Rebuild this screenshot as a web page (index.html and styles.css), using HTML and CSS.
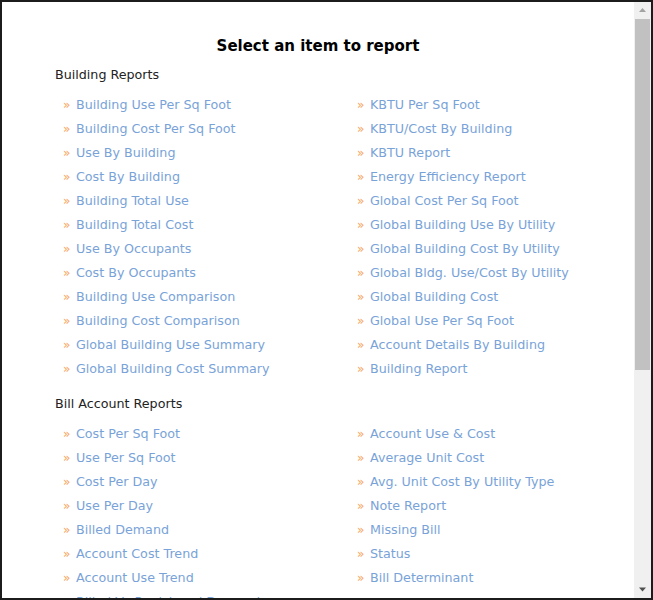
FILE: index.html
```html
<!DOCTYPE html>
<html lang="en">
<head>
    <meta charset="UTF-8">
    <meta name="viewport" content="width=device-width, initial-scale=1.0">
    <title>Reports</title>
    <link rel="stylesheet" href="styles.css">
</head>
<body>
    <div class="dialog">
        <div class="content">
            <h3 class="title">Select an item to report</h3>

            <h4 class="group">Building Reports</h4>
            <div class="cols">
                <ul class="links">
                    <li><a href="#">Building Use Per Sq Foot</a></li>
                    <li><a href="#">Building Cost Per Sq Foot</a></li>
                    <li><a href="#">Use By Building</a></li>
                    <li><a href="#">Cost By Building</a></li>
                    <li><a href="#">Building Total Use</a></li>
                    <li><a href="#">Building Total Cost</a></li>
                    <li><a href="#">Use By Occupants</a></li>
                    <li><a href="#">Cost By Occupants</a></li>
                    <li><a href="#">Building Use Comparison</a></li>
                    <li><a href="#">Building Cost Comparison</a></li>
                    <li><a href="#">Global Building Use Summary</a></li>
                    <li><a href="#">Global Building Cost Summary</a></li>
                </ul>
                <ul class="links">
                    <li><a href="#">KBTU Per Sq Foot</a></li>
                    <li><a href="#">KBTU/Cost By Building</a></li>
                    <li><a href="#">KBTU Report</a></li>
                    <li><a href="#">Energy Efficiency Report</a></li>
                    <li><a href="#">Global Cost Per Sq Foot</a></li>
                    <li><a href="#">Global Building Use By Utility</a></li>
                    <li><a href="#">Global Building Cost By Utility</a></li>
                    <li><a href="#">Global Bldg. Use/Cost By Utility</a></li>
                    <li><a href="#">Global Building Cost</a></li>
                    <li><a href="#">Global Use Per Sq Foot</a></li>
                    <li><a href="#">Account Details By Building</a></li>
                    <li><a href="#">Building Report</a></li>
                </ul>
            </div>

            <h4 class="group">Bill Account Reports</h4>
            <div class="cols">
                <ul class="links">
                    <li><a href="#">Cost Per Sq Foot</a></li>
                    <li><a href="#">Use Per Sq Foot</a></li>
                    <li><a href="#">Cost Per Day</a></li>
                    <li><a href="#">Use Per Day</a></li>
                    <li><a href="#">Billed Demand</a></li>
                    <li><a href="#">Account Cost Trend</a></li>
                    <li><a href="#">Account Use Trend</a></li>
                    <li><a href="#">Billed Vs Registered Demand</a></li>
                </ul>
                <ul class="links">
                    <li><a href="#">Account Use &amp; Cost</a></li>
                    <li><a href="#">Average Unit Cost</a></li>
                    <li><a href="#">Avg. Unit Cost By Utility Type</a></li>
                    <li><a href="#">Note Report</a></li>
                    <li><a href="#">Missing Bill</a></li>
                    <li><a href="#">Status</a></li>
                    <li><a href="#">Bill Determinant</a></li>
                </ul>
            </div>
        </div>

        <!-- vertical scrollbar -->
        <div class="scrollbar">
            <div class="sb-btn">
                <svg width="9" height="5" viewBox="0 0 9 5"><path d="M4.5 0 8 4H1z" fill="#a3a3a3"/></svg>
            </div>
            <div class="sb-thumb"></div>
            <div class="sb-track"></div>
            <div class="sb-btn">
                <svg width="9" height="5" viewBox="0 0 9 5"><path d="M1 0.5h7L4.5 4.5z" fill="#505050"/></svg>
            </div>
        </div>
    </div>
</body>
</html>
```

FILE: styles.css
```css
html, body {
    margin: 0;
    padding: 0;
}
body {
    font-family: "DejaVu Sans", Verdana, sans-serif;
    font-size: 12.7px;
    color: #222;
    background: #fff;
}
.dialog {
    display: flex;
    width: 653px;
    height: 600px;
    box-sizing: border-box;
    border: 2px solid #1c1c1c;
    overflow: hidden;
}
.content {
    flex: 1;
    min-width: 0;
    overflow: hidden;
    padding: 34px 0 0 53px;
}
.title {
    margin: 0 0 10px 0;
    padding-right: 53px;
    font-size: 15px;
    line-height: 20px;
    font-weight: bold;
    text-align: center;
    color: #000;
}
.group {
    margin: 0;
    font-size: 12.7px;
    line-height: 18px;
    font-weight: normal;
    color: #222;
}
.cols {
    display: flex;
    padding: 9px 0 14px 8px;
}
.links {
    list-style: none;
    margin: 0;
    padding: 0;
    width: 294px;
    flex-shrink: 0;
}
.links li {
    line-height: 24px;
    height: 24px;
    white-space: nowrap;
}
.links li::before {
    content: "\00bb";
    display: inline-block;
    width: 13px;
    color: #f7a35c;
    font-size: 12px;
}
.links a {
    color: #79a3d8;
    text-decoration: none;
}
.links a:hover {
    text-decoration: underline;
}

/* scrollbar */
.scrollbar {
    display: flex;
    flex-direction: column;
    width: 17px;
    background: #f0f0f0;
}
.sb-btn {
    display: flex;
    align-items: center;
    justify-content: center;
    height: 17px;
}
.sb-thumb {
    height: 351px;
    margin: 0 1px;
    background: #c1c1c1;
}
.sb-track {
    flex: 1;
}
```
